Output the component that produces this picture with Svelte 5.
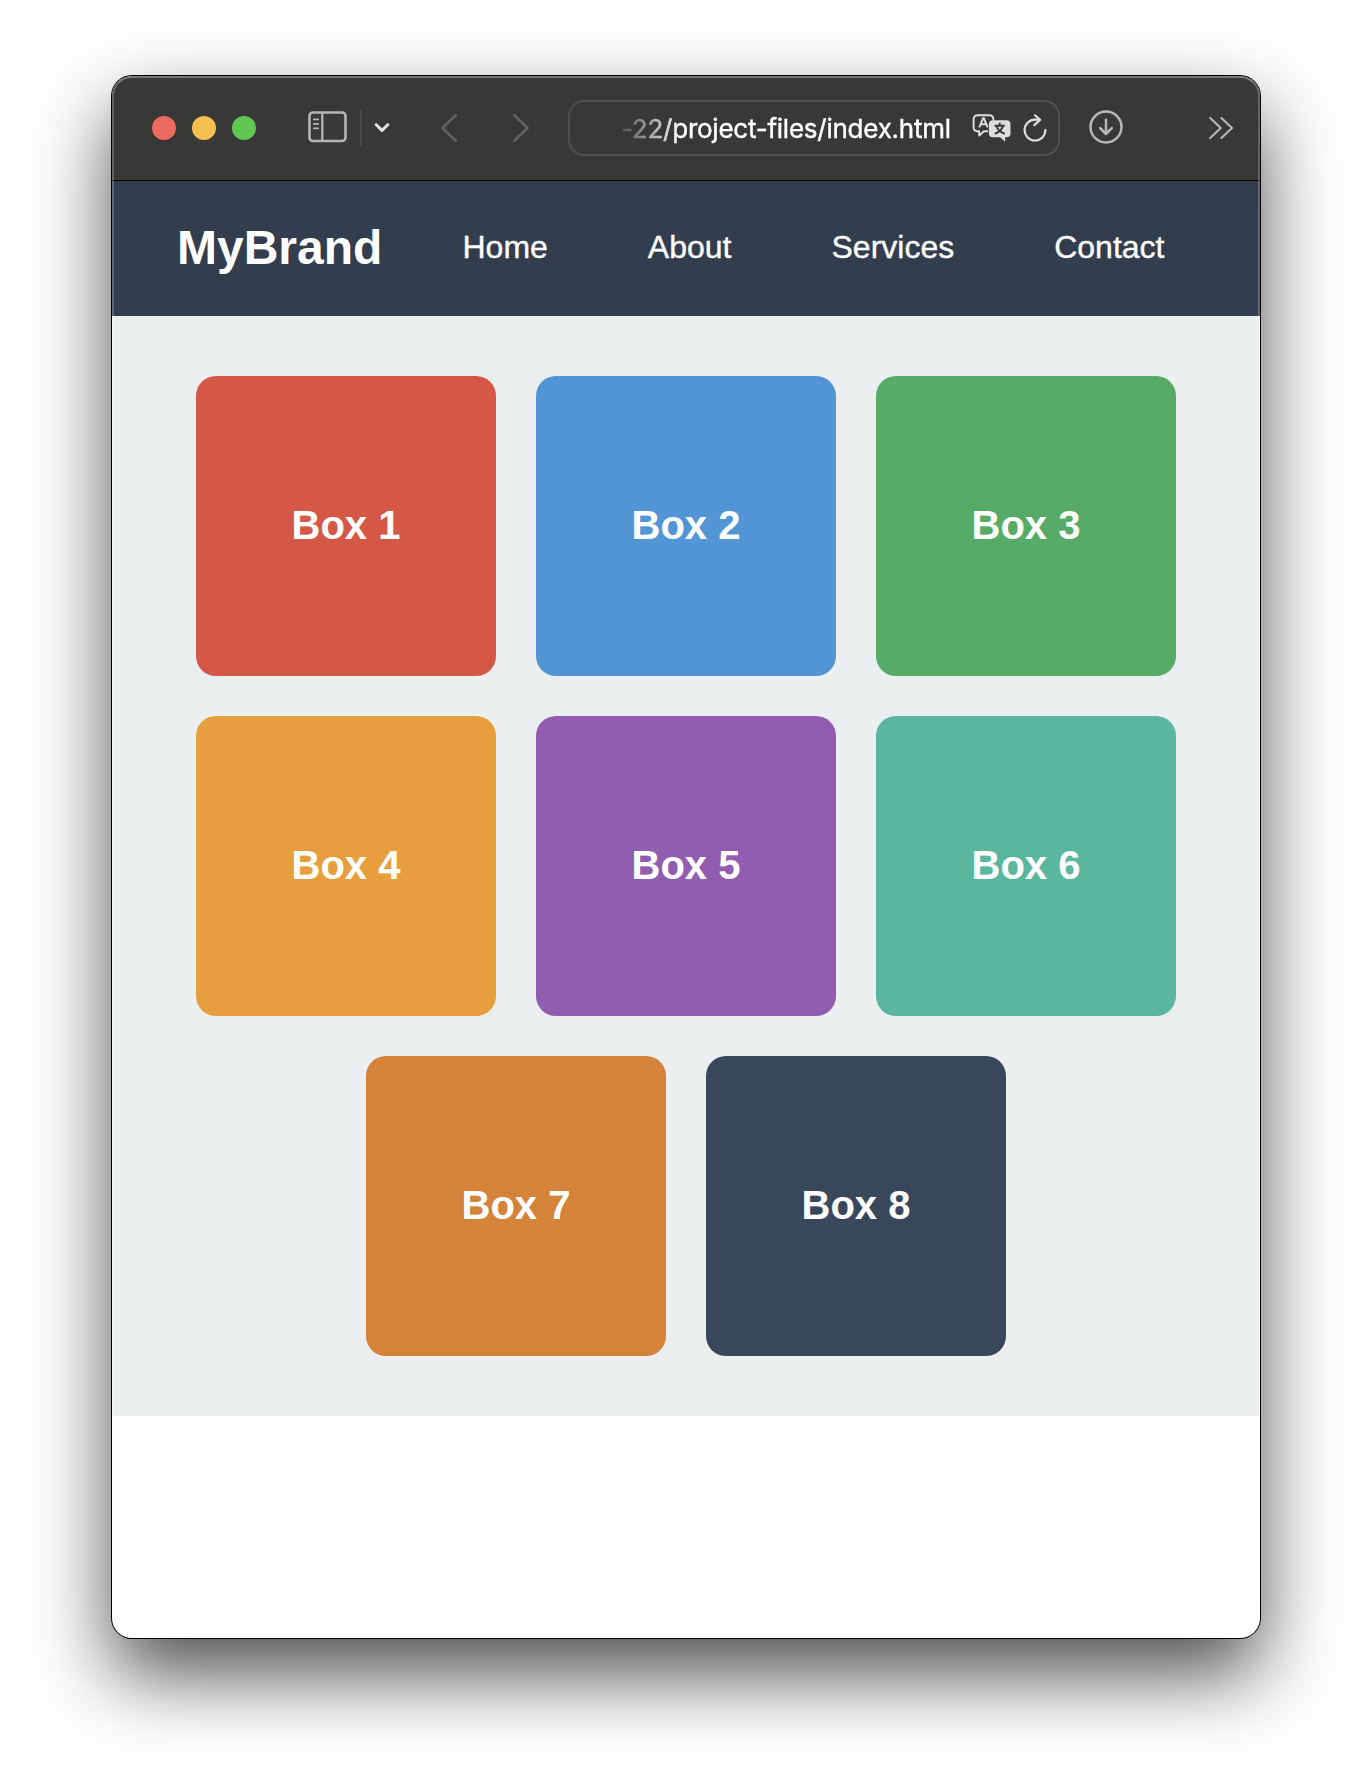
<script>
  const links = ['Home', 'About', 'Services', 'Contact'];
  const boxes = ['red', 'blue', 'green', 'amber', 'purple', 'teal', 'orange', 'navy'];
</script>

<div class="desktop">
  <div class="window">
    <header class="toolbar">
      <div class="lights">
        <span class="light close"></span>
        <span class="light minimize"></span>
        <span class="light zoom"></span>
      </div>
      <svg class="sidebar" width="40" height="32" viewBox="0 0 40 32" fill="none" stroke="#b5b5b4">
        <rect x="1.5" y="1.5" width="36" height="28.5" rx="3.5" stroke-width="2.6" />
        <path d="M14.3 2v28" stroke-width="2.3" />
        <path d="M5.8 8.4h4.4M5.8 12.9h4.4M5.8 17.3h4.4" stroke-width="1.8" stroke-linecap="round" />
      </svg>
      <span class="divider"></span>
      <svg class="menu" width="16" height="12" viewBox="0 0 16 12" fill="none" stroke="#e2e2e1" stroke-width="3" stroke-linecap="round" stroke-linejoin="round">
        <path d="M2.2 2.7 8 8.4l5.8-5.7" />
      </svg>
      <svg class="back" width="18" height="30" viewBox="0 0 18 30" fill="none" stroke="#60605f" stroke-width="2.8" stroke-linecap="round" stroke-linejoin="round">
        <path d="M15.7 2.2 2.4 15l13.3 12.8" />
      </svg>
      <svg class="forward" width="18" height="30" viewBox="0 0 18 30" fill="none" stroke="#60605f" stroke-width="2.8" stroke-linecap="round" stroke-linejoin="round">
        <path d="M2.3 2.2 15.6 15 2.3 27.8" />
      </svg>
      <div class="address">
        <span class="url">-22/project-files/index.html</span>
        <svg class="translate" width="40" height="30" viewBox="0 0 40 30" fill="none">
          <path d="M16 17.2H12L7.2 21.6V17.2H5.2A4 4 0 0 1 1.6 13.2V5A4 4 0 0 1 5.6 1.2H17.4A4 4 0 0 1 21.4 5V6.5" stroke="#dededd" stroke-width="1.9" stroke-linejoin="round" />
          <path d="M7.3 13.3 11.1 4.3h.8l3.8 9M8.7 10.3h5.6" stroke="#dededd" stroke-width="1.9" />
          <path d="M20.9 6.2h13.6a4 4 0 0 1 4 4v9.1a4 4 0 0 1-4 4h-1.4v4.4l-5-4.4h-7.2a4 4 0 0 1-4-4v-9.1a4 4 0 0 1 4-4Z" fill="#dededd" />
          <path d="M27.7 8.8v2.5M22.6 11.8h10.2M24.5 12c1.2 4 4.3 6.4 8.2 7.7M31 12c-1.2 4-4.3 6.4-8.2 7.7" stroke="#383836" stroke-width="2" />
        </svg>
        <svg class="reload" width="24" height="30" viewBox="0 0 24 30" fill="none" stroke="#dededd" stroke-width="2.2" stroke-linecap="round" stroke-linejoin="round">
          <path d="M22.4 16.1A10.4 10.4 0 1 1 12 5.7H16.8" />
          <path d="M12 1.3 17 5.9 11.3 11.1" />
        </svg>
      </div>
      <svg class="download" width="34" height="34" viewBox="0 0 34 34" fill="none" stroke="#b8b8b7" stroke-width="2.5" stroke-linecap="round" stroke-linejoin="round">
        <circle cx="17" cy="17" r="15.5" />
        <path d="M17 9.7v14M11.2 18.2l5.8 5.8 5.8-5.8" />
      </svg>
      <svg class="more" width="26" height="24" viewBox="0 0 26 24" fill="none" stroke="#b8b8b7" stroke-width="2.1" stroke-linecap="round" stroke-linejoin="round">
        <path d="M2.2 2 12.8 12 2.2 22M13.4 2 24 12 13.4 22" />
      </svg>
    </header>

    <nav>
      <div class="brand">MyBrand</div>
      <ul>
        {#each links as link}
          <li>{link}</li>
        {/each}
      </ul>
    </nav>

    <main>
      {#each boxes as color, i}
        <div class="box {color}">Box {i + 1}</div>
      {/each}
    </main>
  </div>
</div>

<style>
  :global(body) {
    background: #fff;
  }

  .desktop {
    box-sizing: border-box;
    width: 1372px;
    height: 1786px;
    padding: 76px 112px 0;
    overflow: hidden;
    font-family: 'Liberation Sans', Arial, sans-serif;
  }

  .window {
    position: relative;
    width: 1148px;
    height: 1562px;
    overflow: hidden;
    border-radius: 20px;
    background: #fff;
    box-shadow: 0 0 0 1px #000, 0 36px 80px rgba(0, 0, 0, 0.7);
  }

  /* Light rim along the inside edge of the window */
  .window::after {
    content: '';
    position: absolute;
    inset: 0;
    border: 2px solid rgba(255, 255, 255, 0.22);
    border-top-color: rgba(255, 255, 255, 0.32);
    border-radius: 20px;
    pointer-events: none;
  }

  .toolbar {
    box-sizing: border-box;
    display: flex;
    align-items: center;
    height: 105px;
    padding: 0 26px 1px 40px;
    background: #383836;
    border-bottom: 1px solid #000;
  }

  svg,
  .divider {
    flex: none;
  }

  .lights {
    display: flex;
    gap: 16px;
  }

  .light {
    width: 24px;
    height: 24px;
    border-radius: 50%;
  }

  .close { background: #ed6a5e; }
  .minimize { background: #f5bf4f; }
  .zoom { background: #61c554; }

  .sidebar { margin: 0 0 2px 52px; }

  .divider {
    width: 2px;
    height: 36px;
    margin-left: 12px;
    background: #4a4a48;
  }

  .menu { margin-left: 12px; }
  .back { margin-left: 50px; }
  .forward { margin-left: 54px; }

  .address {
    box-sizing: border-box;
    display: flex;
    align-items: center;
    width: 492px;
    height: 56px;
    margin-left: 38px;
    padding-left: 51px;
    border: 2px solid #50504e;
    border-radius: 16px;
  }

  .url {
    width: 331px;
    padding-top: 2px;
    font: 400 26px/36px Inter, sans-serif;
    letter-spacing: -0.24px;
    white-space: nowrap;
    color: #fff;
    -webkit-text-stroke: 0.4px #fff;
    mask-image: linear-gradient(90deg, rgba(0, 0, 0, 0.12), #000 60px);
  }

  .translate { margin: 3px 0 0 20px; }
  .reload { margin: 2px 0 0 11px; }
  .download { margin: 0 0 2px 29px; }
  .more { margin: 1px 0 0 auto; }

  nav {
    box-sizing: border-box;
    display: flex;
    align-items: center;
    height: 135px;
    padding: 0 0 2px 65px;
    background: #323e4e;
    color: #fff;
  }

  .brand {
    width: 285.5px;
    font-size: 48px;
    font-weight: 700;
  }

  ul {
    display: flex;
    gap: 100px;
    margin: 0;
    padding: 0;
    list-style: none;
    font-size: 32px;
    -webkit-text-stroke: 0.35px #fff;
  }

  main {
    display: flex;
    flex-wrap: wrap;
    justify-content: center;
    gap: 40px;
    padding: 60px;
    background: #ebeff0;
  }

  .box {
    box-sizing: border-box;
    display: flex;
    align-items: center;
    justify-content: center;
    width: 300px;
    height: 300px;
    padding-bottom: 2px;
    border-radius: 20px;
    color: #fff;
    font-size: 40px;
    font-weight: 700;
  }

  .red { background: #d55745; }
  .blue { background: #5295d5; }
  .green { background: #56ab67; }
  .amber { background: #e69f3c; }
  .purple { background: #925cb0; }
  .teal { background: #5ab69d; }
  .orange { background: #d5823b; }
  .navy { background: #38475c; }
</style>
